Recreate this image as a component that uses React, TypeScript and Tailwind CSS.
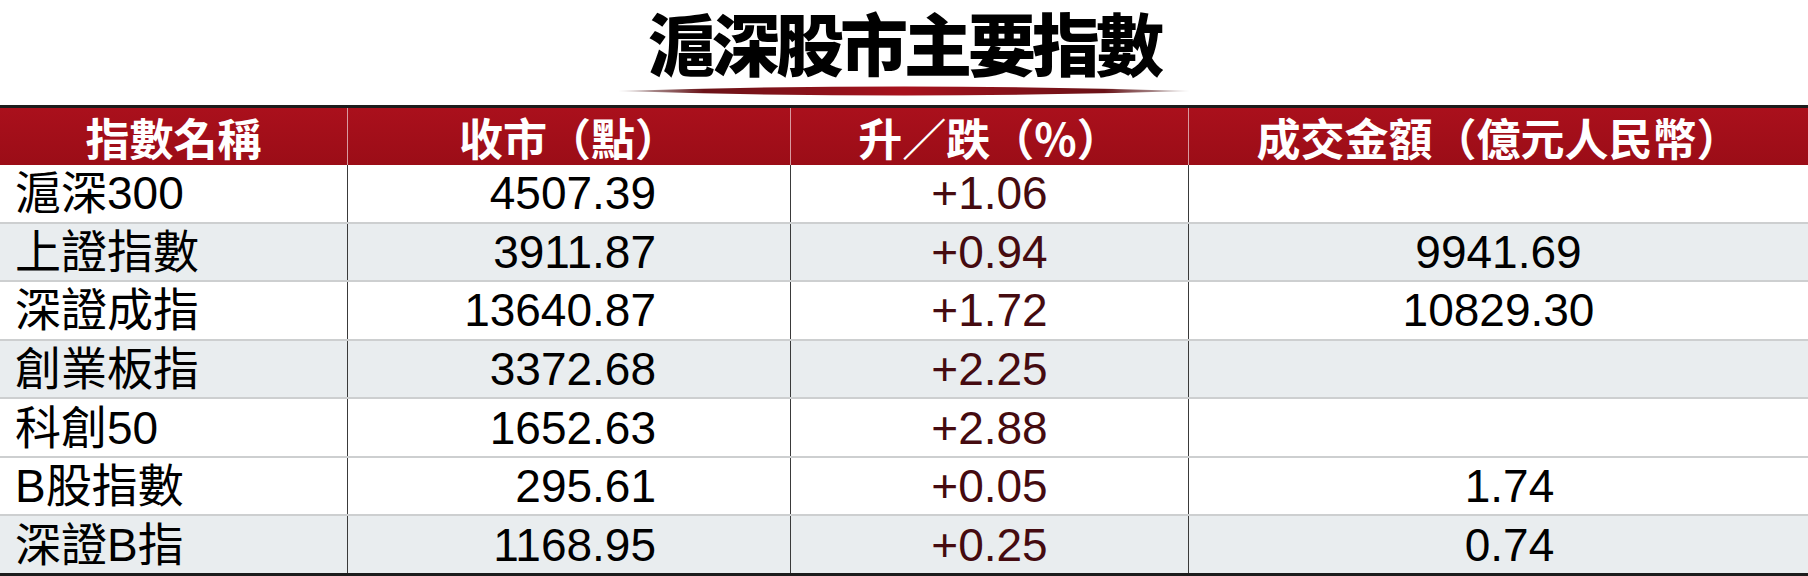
import React from 'react';

interface IndexRow {
  name: string;
  close: string;
  change: string;
  turnover: string;
  shaded: boolean;
  shift?: boolean;
}

const rows: IndexRow[] = [
  { name: '滬深300', close: '4507.39', change: '+1.06', turnover: '', shaded: false },
  { name: '上證指數', close: '3911.87', change: '+0.94', turnover: '9941.69', shaded: true },
  { name: '深證成指', close: '13640.87', change: '+1.72', turnover: '10829.30', shaded: false },
  { name: '創業板指', close: '3372.68', change: '+2.25', turnover: '', shaded: true },
  { name: '科創50', close: '1652.63', change: '+2.88', turnover: '', shaded: false },
  { name: 'B股指數', close: '295.61', change: '+0.05', turnover: '1.74', shaded: false, shift: true },
  { name: '深證B指', close: '1168.95', change: '+0.25', turnover: '0.74', shaded: true, shift: true },
];

const headers = ['指數名稱', '收市（點）', '升／跌（%）', '成交金額（億元人民幣）'];

export default function App() {
  return (
    <div className="w-[1808px] h-[576px] bg-white flex flex-col font-['Liberation_Sans','Noto_Sans_CJK_TC',sans-serif]">
      {/* タイトル */}
      <div className="h-[105px] shrink-0 flex flex-col items-center">
        <h1 className="h-[84px] flex items-center justify-center text-[68px] leading-[84px] tracking-[-4px] font-black text-black font-['Noto_Sans_CJK_TC',sans-serif] whitespace-nowrap">
          滬深股市主要指數
        </h1>
        <svg width="572" height="14" viewBox="0 0 572 14">
          <defs>
            <linearGradient id="swoosh" x1="0" x2="1" y1="0" y2="0">
              <stop offset="0" stopColor="#4a2222" stopOpacity="0.2" />
              <stop offset="0.15" stopColor="#6a1217" />
              <stop offset="0.5" stopColor="#a8121d" />
              <stop offset="0.85" stopColor="#6a1217" />
              <stop offset="1" stopColor="#4a2222" stopOpacity="0.2" />
            </linearGradient>
          </defs>
          <path d="M0 7 Q286 -2 572 7 Q286 16 0 7Z" fill="url(#swoosh)" />
        </svg>
      </div>

      {/* 表 */}
      <div className="flex-1 flex flex-col border-t-[3px] border-[#1c1c1c]">
        <div className="h-[57px] shrink-0 grid grid-cols-[347px_443px_398px_620px] bg-gradient-to-b from-[#aa101c] to-[#9b0d17]">
          {headers.map((h, i) => (
            <div
              key={h}
              className={`flex items-center justify-center text-white text-[44px] leading-none font-bold font-['Noto_Sans_CJK_TC',sans-serif] ${
                i > 0 ? 'border-l border-[#d99aa0]' : ''
              }`}
            >
              {h}
            </div>
          ))}
        </div>

        <div className="flex-1 flex flex-col">
          {rows.map((r, i) => (
            <div
              key={r.name}
              className={`flex-1 grid grid-cols-[347px_443px_398px_620px] text-[46px] leading-none ${
                r.shaded ? 'bg-[#e9edef]' : 'bg-white'
              } ${i === rows.length - 1 ? 'border-b-[3px] border-[#1c1c1c]' : 'border-b-2 border-[#cdcfd0]'}`}
            >
              <div className="flex items-center pl-[15px] text-black">{r.name}</div>
              <div className="flex items-center justify-end pr-[134px] border-l border-[#3a3a3a] text-black">
                {r.close}
              </div>
              <div className="flex items-center justify-center border-l border-[#3a3a3a] text-[#450b10]">
                {r.change}
              </div>
              <div
                className={`flex items-center justify-center border-l border-[#3a3a3a] text-black ${
                  r.shift ? 'pl-[22px]' : ''
                }`}
              >
                {r.turnover}
              </div>
            </div>
          ))}
        </div>
      </div>
    </div>
  );
}
